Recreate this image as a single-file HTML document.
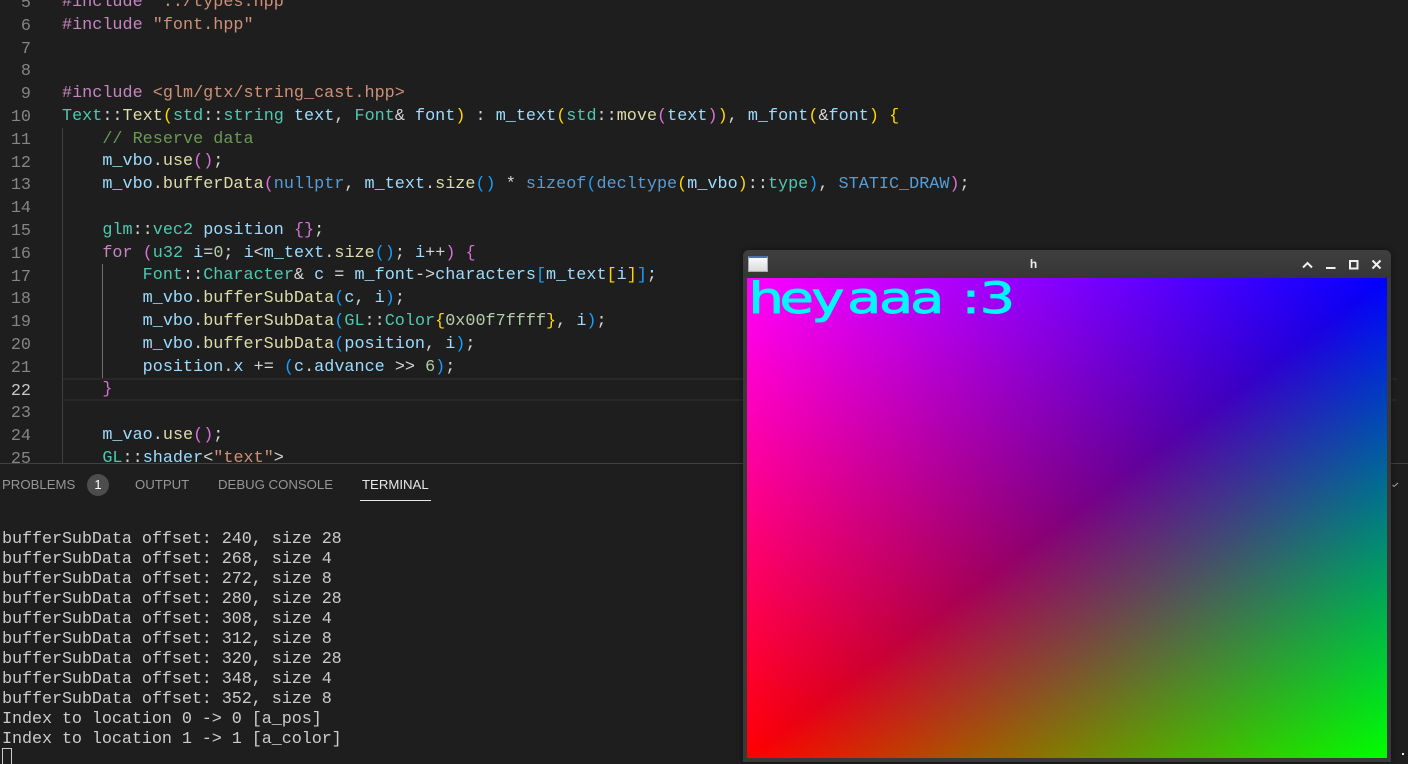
<!DOCTYPE html>
<html>
<head>
<meta charset="utf-8">
<style>
html,body{margin:0;padding:0;width:1408px;height:763px;overflow:hidden;background:#1e1e1e}
#ed{position:absolute;left:0;top:0;width:1408px;height:463px;overflow:hidden;font-family:"Liberation Mono",monospace;font-size:16.8px;color:#d4d4d4}
.l{position:absolute;left:62px;white-space:pre;line-height:22.8px;height:22.8px;margin-top:1.4px;letter-spacing:.012px}
.n{position:absolute;left:0;width:31px;text-align:right;line-height:22.8px;color:#858585;margin-top:2.6px}
.hl{position:absolute;left:63px;top:378px;width:1334px;height:19px;border-top:2px solid #282828;border-bottom:2px solid #282828}
.g1{position:absolute;left:62px;top:128px;width:1px;height:335px;background:#404040}
.g2{position:absolute;left:102px;top:264px;width:1px;height:114px;background:#707070}
.k{color:#c586c0}.s{color:#ce9178}.t{color:#4ec9b0}.v{color:#9cdcfe}.f{color:#dcdcaa}.c{color:#6a9955}.d{color:#b5cea8}.b{color:#569cd6}
.y{color:#ffd700}.o{color:#da70d6}.u{color:#179fff}
#pb{position:absolute;left:0;top:463px;width:1408px;height:1px;background:#414141}
.tab{position:absolute;top:476px;font:13.2px/18px "Liberation Sans",sans-serif;color:#969696;white-space:pre}
#badge{position:absolute;left:87px;top:474px;width:22px;height:22px;border-radius:50%;background:#4d4d4d;color:#fff;font:13px/22px "Liberation Sans",sans-serif;text-align:center}
#ul{position:absolute;left:360px;top:500px;width:71px;height:1px;background:#e7e7e7}
#term{position:absolute;left:2px;top:530px;font-family:"Liberation Mono",monospace;font-size:16.8px;letter-spacing:-.08px;line-height:20px;color:#cccccc;white-space:pre}
#cur{position:absolute;left:2px;top:748px;width:8px;height:15px;border:1px solid #ccc;border-bottom:0}
#win{position:absolute;left:743px;top:250px;width:648px;height:512px;background:#393939;border-radius:6px 6px 0 0;box-shadow:0 0 7px rgba(0,0,0,.45)}
#tb{position:absolute;left:0;top:0;width:648px;height:28px;border-radius:6px 6px 0 0;background:linear-gradient(#3f3f3f,#363636)}
#ic{position:absolute;left:5px;top:6px;width:20px;height:16px;box-sizing:border-box;border:1px solid #aab;border-top:2px solid #4f6fa5;background:linear-gradient(#fafafa,#d8dcd8)}
#ti{position:absolute;left:0;width:581px;top:7px;text-align:center;font:bold 12px/14px "Liberation Sans",sans-serif;color:#eee;padding-left:0}
#gl{position:absolute;left:4px;top:28px;width:640px;height:480px;overflow:hidden;
background-image:linear-gradient(to right,#f00,#000),linear-gradient(to bottom,#00f,#000),linear-gradient(to bottom right,#000 50%,#0f0 100%);
background-blend-mode:screen,screen,normal}
</style>
</head>
<body>
<div id="ed">
<div class="hl"></div><div class="g1"></div><div class="g2"></div>
<div class="n" style="top:-9.6px">5</div><div class="l" style="top:-9.6px"><span class="k">#include</span> <span class="s">"../types.hpp"</span></div>
<div class="n" style="top:13.2px">6</div><div class="l" style="top:13.2px"><span class="k">#include</span> <span class="s">"font.hpp"</span></div>
<div class="n" style="top:36px">7</div>
<div class="n" style="top:58.8px">8</div>
<div class="n" style="top:81.6px">9</div><div class="l" style="top:81.6px"><span class="k">#include</span> <span class="s">&lt;glm/gtx/string_cast.hpp&gt;</span></div>
<div class="n" style="top:104.4px">10</div><div class="l" style="top:104.4px"><span class="t">Text</span>::<span class="f">Text</span><span class="y">(</span><span class="t">std</span>::<span class="t">string</span> <span class="v">text</span>, <span class="t">Font</span>&amp; <span class="v">font</span><span class="y">)</span> : <span class="v">m_text</span><span class="y">(</span><span class="t">std</span>::<span class="f">move</span><span class="o">(</span><span class="v">text</span><span class="o">)</span><span class="y">)</span>, <span class="v">m_font</span><span class="y">(</span>&amp;<span class="v">font</span><span class="y">)</span> <span class="y">{</span></div>
<div class="n" style="top:127.2px">11</div><div class="l" style="top:127.2px">    <span class="c">// Reserve data</span></div>
<div class="n" style="top:150px">12</div><div class="l" style="top:150px">    <span class="v">m_vbo</span>.<span class="f">use</span><span class="o">()</span>;</div>
<div class="n" style="top:172.8px">13</div><div class="l" style="top:172.8px">    <span class="v">m_vbo</span>.<span class="f">bufferData</span><span class="o">(</span><span class="b">nullptr</span>, <span class="v">m_text</span>.<span class="f">size</span><span class="u">()</span> * <span class="b">sizeof</span><span class="u">(</span><span class="b">decltype</span><span class="y">(</span><span class="v">m_vbo</span><span class="y">)</span>::<span class="t">type</span><span class="u">)</span>, <span class="b">STATIC_DRAW</span><span class="o">)</span>;</div>
<div class="n" style="top:195.6px">14</div>
<div class="n" style="top:218.4px">15</div><div class="l" style="top:218.4px">    <span class="t">glm</span>::<span class="t">vec2</span> <span class="v">position</span> <span class="o">{}</span>;</div>
<div class="n" style="top:241.2px">16</div><div class="l" style="top:241.2px">    <span class="k">for</span> <span class="o">(</span><span class="t">u32</span> <span class="v">i</span>=<span class="d">0</span>; <span class="v">i</span>&lt;<span class="v">m_text</span>.<span class="f">size</span><span class="u">()</span>; <span class="v">i</span>++<span class="o">)</span> <span class="o">{</span></div>
<div class="n" style="top:264px">17</div><div class="l" style="top:264px">        <span class="t">Font</span>::<span class="t">Character</span>&amp; <span class="v">c</span> = <span class="v">m_font</span>-&gt;<span class="v">characters</span><span class="u">[</span><span class="v">m_text</span><span class="y">[</span><span class="v">i</span><span class="y">]</span><span class="u">]</span>;</div>
<div class="n" style="top:286.8px">18</div><div class="l" style="top:286.8px">        <span class="v">m_vbo</span>.<span class="f">bufferSubData</span><span class="u">(</span><span class="v">c</span>, <span class="v">i</span><span class="u">)</span>;</div>
<div class="n" style="top:309.6px">19</div><div class="l" style="top:309.6px">        <span class="v">m_vbo</span>.<span class="f">bufferSubData</span><span class="u">(</span><span class="t">GL</span>::<span class="t">Color</span><span class="y">{</span><span class="d">0x00f7ffff</span><span class="y">}</span>, <span class="v">i</span><span class="u">)</span>;</div>
<div class="n" style="top:332.4px">20</div><div class="l" style="top:332.4px">        <span class="v">m_vbo</span>.<span class="f">bufferSubData</span><span class="u">(</span><span class="v">position</span>, <span class="v">i</span><span class="u">)</span>;</div>
<div class="n" style="top:355.2px">21</div><div class="l" style="top:355.2px">        <span class="v">position</span>.<span class="v">x</span> += <span class="u">(</span><span class="v">c</span>.<span class="v">advance</span> &gt;&gt; <span class="d">6</span><span class="u">)</span>;</div>
<div class="n" style="top:378px;color:#c6c6c6">22</div><div class="l" style="top:378px">    <span class="o">}</span></div>
<div class="n" style="top:400.8px">23</div>
<div class="n" style="top:423.6px">24</div><div class="l" style="top:423.6px">    <span class="v">m_vao</span>.<span class="f">use</span><span class="o">()</span>;</div>
<div class="n" style="top:446.4px">25</div><div class="l" style="top:446.4px">    <span class="t">GL</span>::<span class="v">shader</span>&lt;<span class="s">"text"</span>&gt;</div>
</div>
<div id="pb"></div>
<div class="tab" style="left:2px">PROBLEMS</div>
<div id="badge">1</div>
<div class="tab" style="left:135px">OUTPUT</div>
<div class="tab" style="left:218px">DEBUG CONSOLE</div>
<div class="tab" style="left:362px;color:#e7e7e7">TERMINAL</div>
<div id="ul"></div>
<div id="term">bufferSubData offset: 240, size 28
bufferSubData offset: 268, size 4
bufferSubData offset: 272, size 8
bufferSubData offset: 280, size 28
bufferSubData offset: 308, size 4
bufferSubData offset: 312, size 8
bufferSubData offset: 320, size 28
bufferSubData offset: 348, size 4
bufferSubData offset: 352, size 8
Index to location 0 -&gt; 0 [a_pos]
Index to location 1 -&gt; 1 [a_color]</div>
<div id="cur"></div>
<svg style="position:absolute;left:1390px;top:480px" width="10" height="10"><path d="M2.5 5 L4 6.5 L8 3" fill="none" stroke="#b0b0b0" stroke-width="1"/></svg>
<div style="position:absolute;left:1402px;top:753px;width:2px;height:2px;background:#eee"></div>
<div id="win">
<div id="tb"></div>
<div id="ic"></div>
<div id="ti">h</div>
<svg style="position:absolute;left:0;top:0" width="648" height="28">
<path d="M560 17.5 L564.5 13 L569 17.5" fill="none" stroke="#f0f0f0" stroke-width="2"/>
<rect x="583" y="17" width="9.5" height="2" fill="#f0f0f0"/>
<rect x="607" y="11" width="7.5" height="7.5" fill="none" stroke="#f0f0f0" stroke-width="2"/>
<path d="M629.5 10.5 L637.5 18.5 M637.5 10.5 L629.5 18.5" fill="none" stroke="#f0f0f0" stroke-width="2"/>
</svg>
<div id="gl">
<svg style="position:absolute;left:0;top:0" width="640" height="480">
<text transform="scale(1.3,1)" x="1.2 25 49.5 77 101.5 125.5 150 165 179" y="35" font-family="DejaVu Sans" font-size="43" fill="#00f7ff" stroke="#00f7ff" stroke-width=".9" stroke-linejoin="round">heyaaa :3</text>
</svg>
</div>
</div>
</body>
</html>
